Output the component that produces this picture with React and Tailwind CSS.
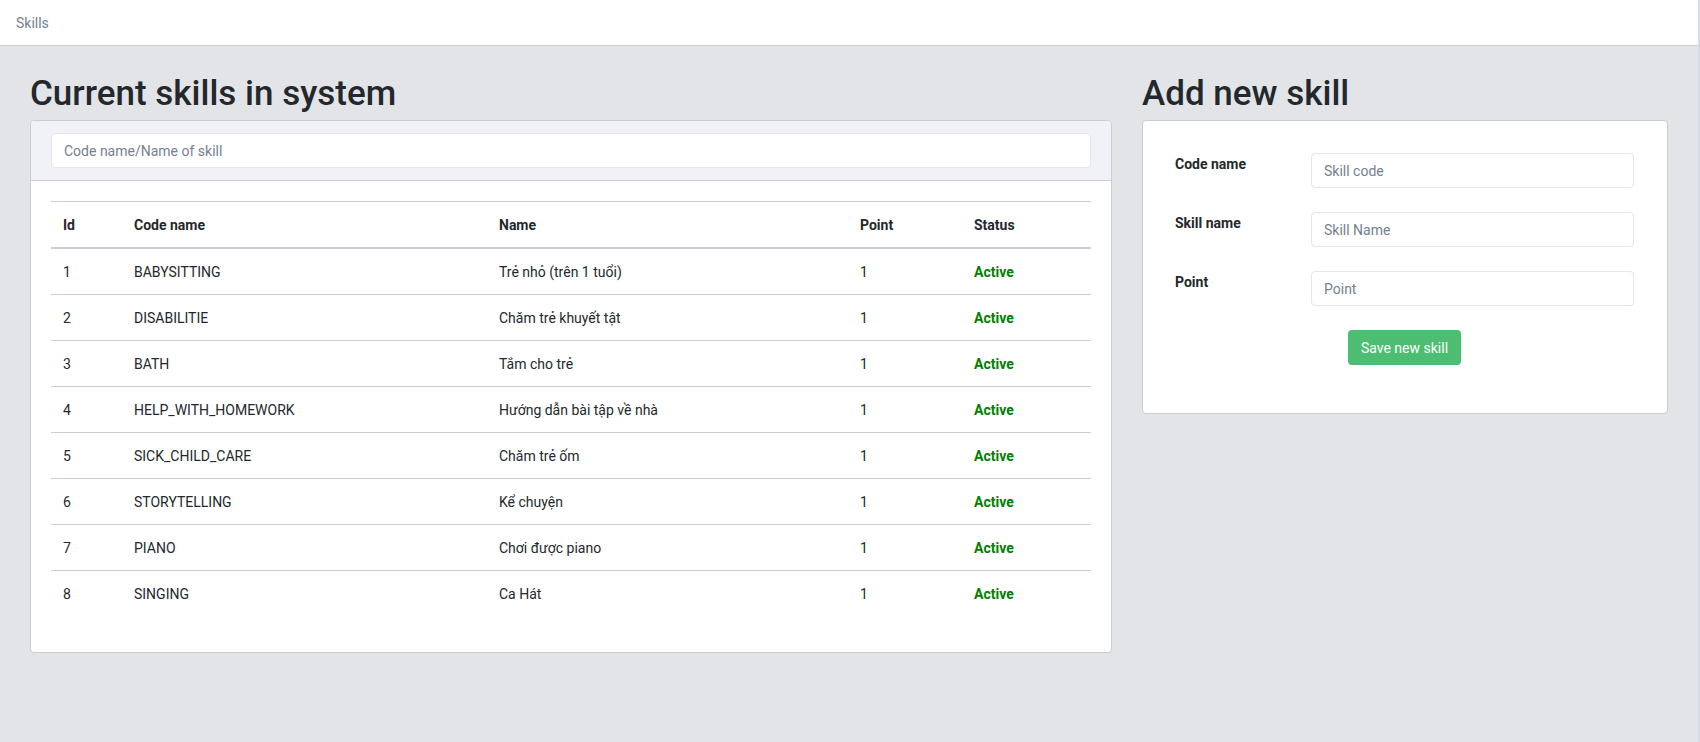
const skills = [
  { id: 1, code: "BABYSITTING", name: "Trẻ nhỏ (trên 1 tuổi)", point: 1 },
  { id: 2, code: "DISABILITIE", name: "Chăm trẻ khuyết tật", point: 1 },
  { id: 3, code: "BATH", name: "Tắm cho trẻ", point: 1 },
  { id: 4, code: "HELP_WITH_HOMEWORK", name: "Hướng dẫn bài tập về nhà", point: 1 },
  { id: 5, code: "SICK_CHILD_CARE", name: "Chăm trẻ ốm", point: 1 },
  { id: 6, code: "STORYTELLING", name: "Kể chuyện", point: 1 },
  { id: 7, code: "PIANO", name: "Chơi được piano", point: 1 },
  { id: 8, code: "SINGING", name: "Ca Hát", point: 1 },
];

const columns = [
  { title: "Id", width: "w-[71px]" },
  { title: "Code name", width: "w-[365px]" },
  { title: "Name", width: "w-[361px]" },
  { title: "Point", width: "w-[114px]" },
  { title: "Status", width: "w-[129px]" },
];

const fields = [
  { id: "skill-code", label: "Code name", placeholder: "Skill code" },
  { id: "skill-name", label: "Skill name", placeholder: "Skill Name" },
  { id: "skill-point", label: "Point", placeholder: "Point" },
];

function TextField(props) {
  return (
    <input
      type="text"
      className="block h-[35px] w-full rounded-sm border border-[#e4e7ea] bg-white px-3 text-[#5c6873] placeholder:text-[#73818f]"
      {...props}
    />
  );
}

function Cell({ children, className = "" }) {
  return (
    <td className={"border-t border-[#c8ced3] px-3 pt-[13px] pb-[11px] " + className}>
      {children}
    </td>
  );
}

function SkillTable() {
  return (
    <table className="mb-4 w-full text-left">
      <thead>
        <tr>
          {columns.map(({ title, width }) => (
            <th
              key={title}
              scope="col"
              className={
                "border-t border-b-2 border-[#c8ced3] px-3 pt-[13px] pb-[11px] font-bold " + width
              }
            >
              {title}
            </th>
          ))}
        </tr>
      </thead>
      <tbody>
        {skills.map((skill) => (
          <tr key={skill.id}>
            <Cell>{skill.id}</Cell>
            <Cell>{skill.code}</Cell>
            <Cell>{skill.name}</Cell>
            <Cell>{skill.point}</Cell>
            <Cell className="font-bold text-[#008000]">Active</Cell>
          </tr>
        ))}
      </tbody>
    </table>
  );
}

function Heading({ children }) {
  return <h1 className="mb-[5px] text-[35px] leading-[42px] font-medium">{children}</h1>;
}

export default function App() {
  return (
    <div className="min-h-screen border-r-2 border-[#d3dde6] bg-[#e3e4e8] font-[Roboto,sans-serif] text-[14px] leading-[21px] text-[#23282c]">
      <nav
        aria-label="Breadcrumb"
        className="border-b border-[#c8ced3] bg-white px-4 pt-[13px] pb-[11px]"
      >
        <ol>
          <li className="text-[#73818f]">Skills</li>
        </ol>
      </nav>
      <main className="grid grid-cols-[2fr_1fr] items-start px-[15px] pt-[27px]">
        <section className="px-[15px]">
          <Heading>Current skills in system</Heading>
          <div className="overflow-hidden rounded-sm border border-[#c8ced3] bg-white">
            <div className="border-b border-[#c8ced3] bg-[#f0f2f7] px-5 py-3">
              <TextField aria-label="Search skills" placeholder="Code name/Name of skill" />
            </div>
            <div className="p-5">
              <SkillTable />
            </div>
          </div>
        </section>
        <section className="px-[15px]">
          <Heading>Add new skill</Heading>
          <form className="flex flex-col gap-6 rounded-sm border border-[#c8ced3] bg-white pt-8 pr-[33px] pb-12 pl-8">
            {fields.map((field) => (
              <div key={field.id} className="grid grid-cols-[136px_1fr] items-start">
                <label htmlFor={field.id} className="pt-px font-bold">
                  {field.label}
                </label>
                <TextField id={field.id} placeholder={field.placeholder} />
              </div>
            ))}
            <button
              type="button"
              className="h-[35px] self-center rounded-sm bg-[#4dbd74] px-[13px] pt-0.5 text-white"
            >
              Save new skill
            </button>
          </form>
        </section>
      </main>
    </div>
  );
}
